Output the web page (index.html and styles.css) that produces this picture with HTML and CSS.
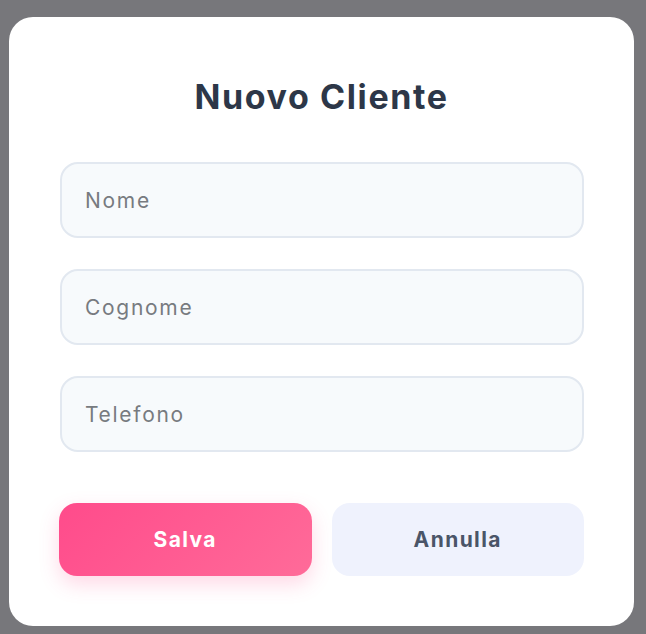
FILE: index.html
```html
<!DOCTYPE html>
<html lang="it">
<head>
<meta charset="utf-8">
<title>Nuovo Cliente</title>
<link rel="stylesheet" href="styles.css">
</head>
<body>
<div class="modal">
  <h2 class="title">Nuovo Cliente</h2>
  <form class="form">
    <input class="field" type="text" placeholder="Nome">
    <input class="field" type="text" placeholder="Cognome">
    <input class="field" type="tel" placeholder="Telefono">
    <div class="actions">
      <button type="button" class="btn btn-primary">Salva</button>
      <button type="button" class="btn btn-secondary">Annulla</button>
    </div>
  </form>
</div>
</body>
</html>
```

FILE: styles.css
```css
* { box-sizing: border-box; }
html, body { margin: 0; height: 100%; }
body {
  background: #77777b;
  padding: 17px 0 0 9px;
  font-family: "Inter", "Noto Sans", sans-serif;
  overflow: hidden;
}
.modal {
  width: 625px;
  height: 609px;
  background: #ffffff;
  border-radius: 24px;
  padding: 50px;
}
.title {
  margin: 10px 0 45px;
  height: 40px;
  line-height: 40px;
  text-align: center;
  font-size: 34px;
  font-weight: 700;
  letter-spacing: 1.6px;
  color: #2d3748;
}
.form {
  display: flex;
  flex-direction: column;
  gap: 31px;
}
.field {
  width: 524px;
  margin-left: 1px;
  height: 76px;
  border: 2px solid #e2e8f0;
  border-radius: 18px;
  background: #f7fafc;
  padding: 0 23px;
  font-family: inherit;
  font-size: 21px;
  letter-spacing: 1.7px;
  color: #2d3748;
  outline: none;
}
.field::placeholder { color: #777b80; }
.actions {
  display: flex;
  gap: 20px;
  margin-top: 20px;
}
.btn {
  flex: 1;
  height: 73px;
  border: none;
  border-radius: 18px;
  font-family: inherit;
  font-size: 21px;
  font-weight: 700;
  letter-spacing: 1.4px;
  cursor: pointer;
}
.btn-primary {
  background: linear-gradient(135deg, #ff4b8b 0%, #ff6b99 100%);
  color: #ffffff;
  box-shadow: 0 8px 20px rgba(255, 77, 141, 0.22);
}
.btn-secondary {
  background: #eff2fd;
  color: #4a5568;
}
```
